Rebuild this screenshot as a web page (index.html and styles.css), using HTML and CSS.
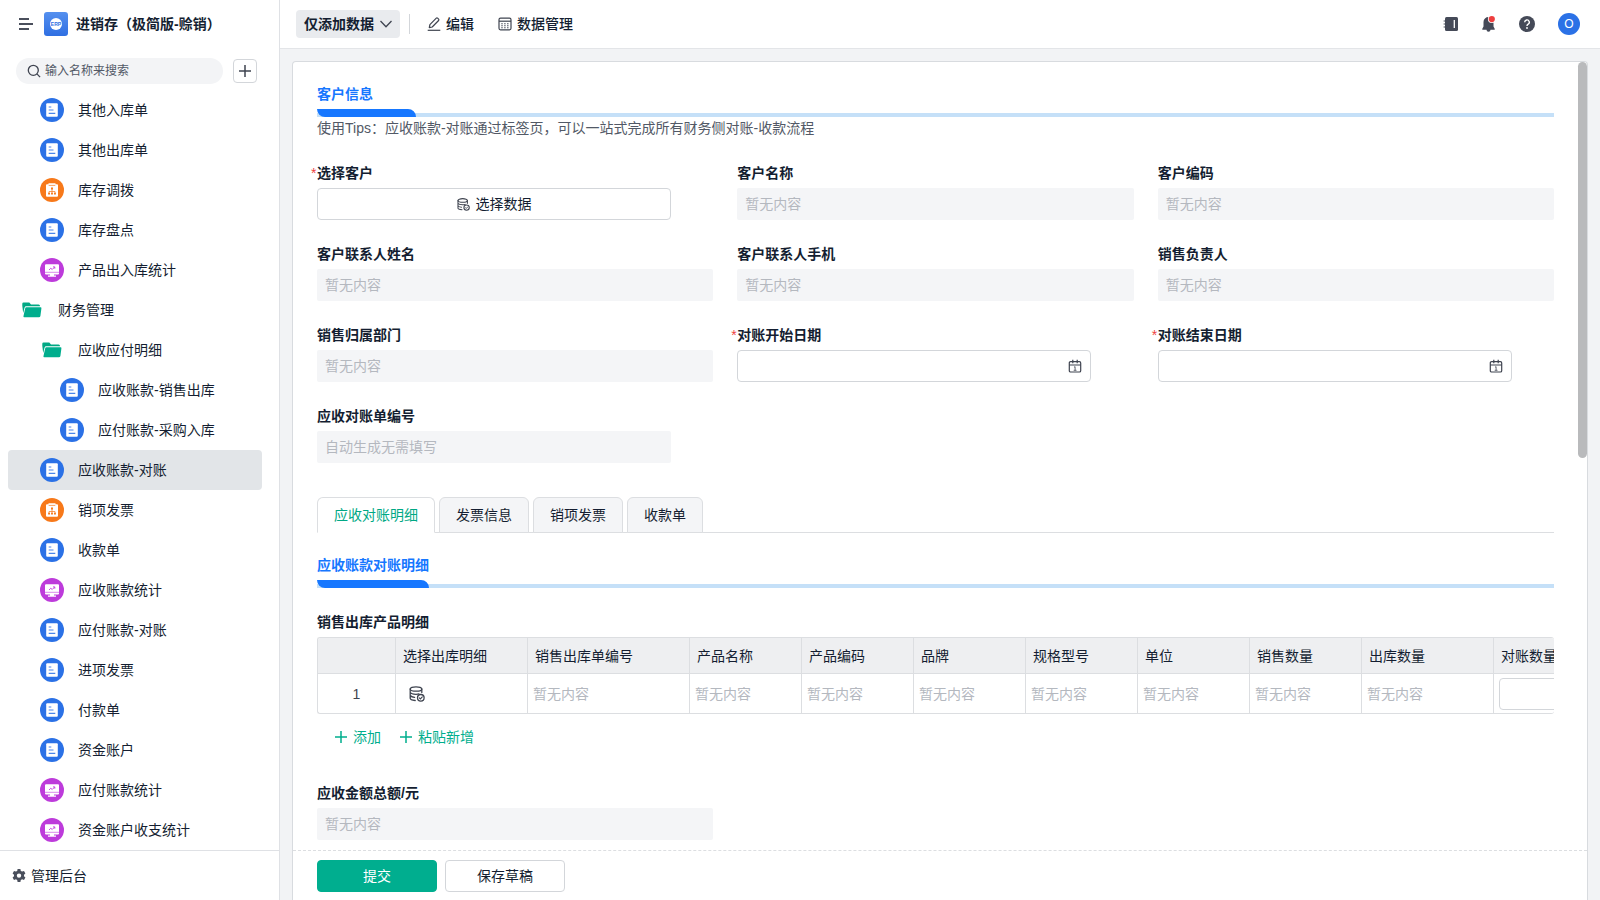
FILE: index.html
```html
<!DOCTYPE html>
<html lang="zh-CN">
<head>
<meta charset="utf-8">
<title>进销存（极简版-赊销）</title>
<link rel="stylesheet" href="styles.css">
</head>
<body>
<svg class="sprite" aria-hidden="true">
  <symbol id="i-doc" viewBox="0 0 24 24">
    <circle cx="12" cy="12" r="12" fill="#2b71e6"/>
    <rect x="6.200" y="5.300" width="11.600" height="13.400" rx="1" fill="#fff"/>
    <path d="M8.700 9h2.600M8.700 12h4.800M8.700 15.300h6.600" stroke="#4a86ea" stroke-width="1.200"/>
  </symbol>
  <symbol id="i-flow" viewBox="0 0 24 24">
    <circle cx="12" cy="12" r="12" fill="#f7791a"/>
    <path d="M7 6.200h1.500V5.200h7v1H17a1 1 0 0 1 1 1v10.600a1 1 0 0 1-1 1H7a1 1 0 0 1-1-1V7.200a1 1 0 0 1 1-1z" fill="#fff"/>
    <path d="M8.700 7.400h6.600" stroke="#f7791a" stroke-width=".7"/>
    <path d="M12 11v4M9 15v-1.500h6V15" fill="none" stroke="#f7791a" stroke-width=".7"/>
    <path d="M11 9.600h2v2h-2zM8.100 14.700h1.900v1.700H8.100zM11.050 14.700h1.900v1.700h-1.900zM14 14.700h1.900v1.700H14z" fill="#f7791a"/>
  </symbol>
  <symbol id="i-chart" viewBox="0 0 24 24">
    <circle cx="12" cy="12" r="12" fill="#bd3bdb"/>
    <path d="M6 6.200h12a1 1 0 0 1 1 1v8.300a1 1 0 0 1-1 1h-4v1h2v1.200H8v-1.200h2v-1H6a1 1 0 0 1-1-1V7.200a1 1 0 0 1 1-1z" fill="#fff"/>
    <path d="M9 12l1.800-1.800 1.400 1.300L14.500 9.200M13 8.900h1.800v1.800" fill="none" stroke="#bd3bdb" stroke-width=".9"/>
    <path d="M5 14.300h14" stroke="#bd3bdb" stroke-width=".6"/>
  </symbol>
  <symbol id="i-folder" viewBox="0 0 20 16">
    <path d="M1.500 .6h5.800l1.700 2H16.500A1.500 1.500 0 0 1 18 4.300H4.200A1.600 1.600 0 0 0 2.600 5.500L1.200 11 0.300 4V1.800A1.200 1.200 0 0 1 1.500.6z" fill="#00a884"/>
    <path d="M4.300 5.300h14.200a.9.9 0 0 1 .9 1.100l-1 7.600a1.500 1.500 0 0 1-1.500 1.300H2.500a1 1 0 0 1-1-1.300L3.200 6.200a1.200 1.200 0 0 1 1.100-.9z" fill="#00ae8d"/>
  </symbol>
  <symbol id="i-plus" viewBox="0 0 14 14">
    <path d="M7 1v12M1 7h12" stroke="currentColor" stroke-width="1.500"/>
  </symbol>
  <symbol id="i-data" viewBox="0 0 16 16">
    <g fill="none" stroke="currentColor" stroke-width="1.300" stroke-linecap="round">
      <ellipse cx="7" cy="3" rx="5.800" ry="2.200"/>
      <path d="M1.200 3v9.300c0 1.100 2.100 2 5 2.200M12.800 3v3.600M1.200 6.300c.6 1.200 3 2 5.800 2 1.200 0 2.200-.1 3-.4M1.200 9.400c.5 1 2.100 1.800 4.400 2"/>
      <circle cx="11.800" cy="11.800" r="3.300"/>
      <path d="M10.300 11.800l1.100 1.100 1.900-2" stroke-width="1.100"/>
    </g>
  </symbol>
  <symbol id="i-cal" viewBox="0 0 14 14">
    <g fill="none" stroke="currentColor" stroke-width="1.200">
      <rect x="1.300" y="2.600" width="11.400" height="10.400" rx="1.300"/>
      <path d="M1.300 6h11.400M4.800 .8v3.400M9.200 .8v3.400"/>
      <path d="M6 8.200l1.100-.5v3.600M5.700 11.300h2.800" stroke-width=".8"/>
    </g>
  </symbol>
</svg>

<div class="app">
  <aside class="sidebar">
    <header class="brand">
      <button class="icon-btn" type="button" aria-label="收起菜单">
        <svg width="14" height="14" viewBox="0 0 14 14"><path d="M0 2h10M0 7h14M0 12h10" stroke="#4a4f5c" stroke-width="1.800"/></svg>
      </button>
      <svg width="24" height="24" viewBox="0 0 24 24">
        <defs><linearGradient id="logo" x1="0" y1="0" x2="0" y2="1"><stop offset="0" stop-color="#5590ef"/><stop offset="1" stop-color="#2f6fe2"/></linearGradient></defs>
        <rect width="24" height="24" rx="3" fill="url(#logo)"/>
        <circle cx="12" cy="12" r="6" fill="#fff"/>
        <text class="logo-text" x="12" y="14" text-anchor="middle">ERP</text>
      </svg>
      <h1 class="brand-name">进销存（极简版-赊销）</h1>
    </header>
    <div class="search-row">
      <label class="search">
        <svg width="14" height="14" viewBox="0 0 14 14"><g fill="none" stroke="#3f4450" stroke-width="1.300"><circle cx="6.300" cy="6.300" r="5"/><path d="M9.900 9.900l3.200 3.200"/></g></svg>
        <input type="text" placeholder="输入名称来搜索" aria-label="输入名称来搜索">
      </label>
      <button class="add-btn" type="button" aria-label="新建"><svg width="14" height="14"><use href="#i-plus"/></svg></button>
    </div>
    <nav class="menu">
      <a class="item" href="#"><svg class="dot"><use href="#i-doc"/></svg>其他入库单</a>
      <a class="item" href="#"><svg class="dot"><use href="#i-doc"/></svg>其他出库单</a>
      <a class="item" href="#"><svg class="dot"><use href="#i-flow"/></svg>库存调拨</a>
      <a class="item" href="#"><svg class="dot"><use href="#i-doc"/></svg>库存盘点</a>
      <a class="item" href="#"><svg class="dot"><use href="#i-chart"/></svg>产品出入库统计</a>
      <a class="item level-0" href="#"><span class="dot"><svg width="20" height="16"><use href="#i-folder"/></svg></span>财务管理</a>
      <a class="item" href="#"><span class="dot"><svg width="20" height="16"><use href="#i-folder"/></svg></span>应收应付明细</a>
      <a class="item level-2" href="#"><svg class="dot"><use href="#i-doc"/></svg>应收账款-销售出库</a>
      <a class="item level-2" href="#"><svg class="dot"><use href="#i-doc"/></svg>应付账款-采购入库</a>
      <a class="item active" href="#" aria-current="page"><svg class="dot"><use href="#i-doc"/></svg>应收账款-对账</a>
      <a class="item" href="#"><svg class="dot"><use href="#i-flow"/></svg>销项发票</a>
      <a class="item" href="#"><svg class="dot"><use href="#i-doc"/></svg>收款单</a>
      <a class="item" href="#"><svg class="dot"><use href="#i-chart"/></svg>应收账款统计</a>
      <a class="item" href="#"><svg class="dot"><use href="#i-doc"/></svg>应付账款-对账</a>
      <a class="item" href="#"><svg class="dot"><use href="#i-doc"/></svg>进项发票</a>
      <a class="item" href="#"><svg class="dot"><use href="#i-doc"/></svg>付款单</a>
      <a class="item" href="#"><svg class="dot"><use href="#i-doc"/></svg>资金账户</a>
      <a class="item" href="#"><svg class="dot"><use href="#i-chart"/></svg>应付账款统计</a>
      <a class="item" href="#"><svg class="dot"><use href="#i-chart"/></svg>资金账户收支统计</a>
    </nav>
    <a class="admin" href="#">
      <svg width="14" height="14" viewBox="0 0 14 14"><path fill="#4a4f5c" fill-rule="evenodd" d="M5.600 0h2.800l.4 1.900 1.300.7 1.900-.6 1.400 2.400-1.400 1.300v1.500l1.400 1.300-1.400 2.400-1.900-.6-1.300.8-.4 1.900H5.600l-.4-1.900-1.300-.8-1.900.6L.6 8.500 2 7.200V5.700L.6 4.400 2 2l1.900.6 1.300-.7zM7 4.400a2.200 2.200 0 1 0 0 4.400 2.200 2.200 0 0 0 0-4.400z"/></svg>
      管理后台
    </a>
  </aside>

  <main class="main">
    <header class="topbar">
      <button class="mode" type="button">仅添加数据
        <svg width="14" height="8" viewBox="0 0 14 8"><path d="M1.500 1L7 6.700 12.500 1" fill="none" stroke="#3f4450" stroke-width="1.300"/></svg>
      </button>
      <span class="divider"></span>
      <button class="tool" type="button">
        <svg width="14" height="14" viewBox="0 0 14 14"><g fill="none" stroke="#3f4450" stroke-width="1.200" stroke-linejoin="round"><path d="M2.300 10.700l.6-3L9.300 1.200a.9.9 0 0 1 1.300 0l1 1a.9.9 0 0 1 0 1.300L5.200 10z"/><path d="M.7 13.300h12.600"/></g></svg>
        编辑
      </button>
      <button class="tool" type="button">
        <svg width="14" height="14" viewBox="0 0 14 14"><g fill="none" stroke="#3f4450" stroke-width="1.200"><rect x="1" y="1.200" width="12" height="11.600" rx="1.500"/><path d="M1 4.200h12"/><path d="M3.300 6.800h8M3.300 8.800h8M3.300 10.800h8" stroke-width="1.100" stroke-dasharray="1.400 1.500"/></g></svg>
        数据管理
      </button>
      <div class="top-actions">
        <button class="icon-btn" type="button" aria-label="通讯录">
          <svg width="16" height="16" viewBox="0 0 16 16"><path fill="#454a58" d="M3.500 1h10A1.500 1.500 0 0 1 15 2.500v11a1.500 1.500 0 0 1-1.500 1.500h-10A1.500 1.500 0 0 1 2 13.500v-11A1.500 1.500 0 0 1 3.500 1z"/><path d="M.6 5h2M.6 8h2M.6 11h2" stroke="#454a58" stroke-width="1.200"/><path d="M11.300 4v8" stroke="#fff" stroke-width="1.300"/></svg>
        </button>
        <button class="icon-btn" type="button" aria-label="消息">
          <svg width="16" height="16" viewBox="0 0 16 16"><path fill="#454a58" d="M7.500 1a5 5 0 0 1 5 5v4.500l1.200 2.300v.9H1.300v-.9l1.200-2.300V6a5 5 0 0 1 5-5zM5.500 13.700h4a2 2 0 0 1-4 0z"/><circle cx="10.800" cy="3.100" r="3.900" fill="#fff"/><circle cx="10.800" cy="3.100" r="3.100" fill="#ee3f3f"/></svg>
        </button>
        <button class="icon-btn" type="button" aria-label="帮助">
          <svg width="16" height="16" viewBox="0 0 16 16"><circle cx="8" cy="8" r="8" fill="#454a58"/><path d="M5.700 6.300a2.300 2.300 0 1 1 3.500 1.900c-.8.500-1.200.8-1.200 1.700" fill="none" stroke="#fff" stroke-width="1.400"/><circle cx="8" cy="12" r=".9" fill="#fff"/></svg>
        </button>
        <button class="avatar" type="button">O</button>
      </div>
    </header>

    <form class="card">
      <div class="scroll">
        <h2 class="section-title"><span class="section-text">客户信息</span></h2>
        <p class="tips">使用Tips：应收账款-对账通过标签页，可以一站式完成所有财务侧对账-收款流程</p>
        <div class="grid">
          <div class="field"><span class="label required" id="l-cust">选择客户</span><button class="box narrow pick" type="button" aria-describedby="l-cust"><svg width="13" height="13"><use href="#i-data"/></svg>选择数据</button></div>
          <div class="field"><label class="label" for="f2">客户名称</label><input class="box readonly" id="f2" placeholder="暂无内容" readonly></div>
          <div class="field"><label class="label" for="f3">客户编码</label><input class="box readonly" id="f3" placeholder="暂无内容" readonly></div>
          <div class="field"><label class="label" for="f4">客户联系人姓名</label><input class="box readonly" id="f4" placeholder="暂无内容" readonly></div>
          <div class="field"><label class="label" for="f5">客户联系人手机</label><input class="box readonly" id="f5" placeholder="暂无内容" readonly></div>
          <div class="field"><label class="label" for="f6">销售负责人</label><input class="box readonly" id="f6" placeholder="暂无内容" readonly></div>
          <div class="field"><label class="label" for="f7">销售归属部门</label><input class="box readonly" id="f7" placeholder="暂无内容" readonly></div>
          <div class="field"><label class="label required" for="f8">对账开始日期</label><div class="box narrow date"><input id="f8" type="text"><svg width="14" height="14"><use href="#i-cal"/></svg></div></div>
          <div class="field"><label class="label required" for="f9">对账结束日期</label><div class="box narrow date"><input id="f9" type="text"><svg width="14" height="14"><use href="#i-cal"/></svg></div></div>
          <div class="field"><label class="label" for="f10">应收对账单编号</label><input class="box narrow readonly" id="f10" placeholder="自动生成无需填写" readonly></div>
        </div>

        <div class="tabs" role="tablist">
          <button class="tab on" type="button" role="tab" aria-selected="true">应收对账明细</button>
          <button class="tab" type="button" role="tab">发票信息</button>
          <button class="tab" type="button" role="tab">销项发票</button>
          <button class="tab" type="button" role="tab">收款单</button>
        </div>

        <h2 class="section-title"><span class="section-text">应收账款对账明细</span></h2>
        <div class="field subform">
          <span class="label" id="l-sub">销售出库产品明细</span>
          <div class="table-wrap">
            <table class="table" aria-labelledby="l-sub">
              <colgroup><col class="c-index"><col class="c-mid"><col class="c-wide"><col span="6" class="c-std"><col span="2" class="c-mid"></colgroup>
              <thead>
                <tr><th></th><th>选择出库明细</th><th>销售出库单编号</th><th>产品名称</th><th>产品编码</th><th>品牌</th><th>规格型号</th><th>单位</th><th>销售数量</th><th>出库数量</th><th>对账数量</th></tr>
              </thead>
              <tbody>
                <tr><td class="index">1</td><td><button class="icon-btn cell-pick" type="button" aria-label="选择出库明细"><svg width="16" height="16"><use href="#i-data"/></svg></button></td><td>暂无内容</td><td>暂无内容</td><td>暂无内容</td><td>暂无内容</td><td>暂无内容</td><td>暂无内容</td><td>暂无内容</td><td>暂无内容</td><td><input class="box" type="text" aria-label="对账数量"></td></tr>
              </tbody>
            </table>
          </div>
          <div class="row-actions">
            <button class="link" type="button"><svg width="14" height="14"><use href="#i-plus"/></svg>添加</button>
            <button class="link" type="button"><svg width="14" height="14"><use href="#i-plus"/></svg>粘贴新增</button>
          </div>
        </div>
        <div class="grid">
          <div class="field"><label class="label" for="f11">应收金额总额/元</label><input class="box readonly" id="f11" placeholder="暂无内容" readonly></div>
        </div>
      </div>
      <span class="thumb"></span>
      <footer class="actions">
        <button class="btn primary" type="submit">提交</button>
        <button class="btn" type="button">保存草稿</button>
      </footer>
    </form>
  </main>
</div>
</body>
</html>
```
FILE: styles.css
```css
* { box-sizing: border-box; }
body {
  margin: 0;
  color: #141e31;
  font: 14px/22px "Liberation Sans", "Noto Sans CJK SC", sans-serif;
}
button, input { font: inherit; color: inherit; }
button { cursor: pointer; padding: 0; border: 0; background: none; }
input { min-width: 0; outline: 0; }
a { color: inherit; text-decoration: none; }
svg { flex: none; display: block; }
h1, h2, p { margin: 0; }
.sprite { position: absolute; width: 0; height: 0; }

.app { display: flex; height: 100vh; overflow: hidden; }

/* Sidebar */
.sidebar {
  flex: none;
  width: 280px;
  display: flex;
  flex-direction: column;
  border-right: 1px solid #dfe1e5;
  background: #fff;
}
.brand { display: flex; align-items: center; height: 48px; padding-left: 19px; }
.brand svg { margin-right: 8px; }
.brand .icon-btn svg { margin: 0; }
.brand .icon-btn { margin-right: 11px; }
.brand-name { font-size: 14px; font-weight: 600; }
.logo-text { font: bold 5px "Liberation Sans", sans-serif; fill: #2f6fe2; }
.search-row { display: flex; align-items: center; gap: 10px; padding: 10px 22px 6px 16px; }
.search {
  flex: 1;
  min-width: 0;
  display: flex;
  align-items: center;
  gap: 4px;
  height: 26px;
  padding: 0 11px;
  border-radius: 13px;
  background: #f3f4f6;
}
.search input { flex: 1; height: 24px; padding: 0; border: 0; background: none; font-size: 12px; }
.search input::placeholder { color: #525966; }
.add-btn {
  display: grid;
  place-items: center;
  width: 24px;
  height: 24px;
  border: 1px solid #d3d6da;
  border-radius: 4px;
  color: #3f4450;
}
.menu { flex: 1; min-height: 0; overflow: hidden; padding: 0 17px 0 8px; }
.item { display: flex; align-items: center; gap: 14px; height: 40px; padding-left: 32px; border-radius: 4px; }
.level-0 { padding-left: 12px; }
.level-2 { padding-left: 52px; }
.item.active { background: #e2e5e8; }
.dot { flex: none; display: grid; place-items: center; width: 24px; height: 24px; }
.admin { display: flex; align-items: center; gap: 5px; height: 50px; padding-left: 12px; border-top: 1px solid #dfe1e5; }

/* Top bar */
.main { flex: 1; min-width: 0; display: flex; flex-direction: column; background: #f2f3f5; }
.topbar {
  flex: none;
  display: flex;
  align-items: center;
  height: 49px;
  padding: 0 20px 1px 16px;
  border-bottom: 1px solid #e3e5e8;
  background: #fff;
}
.mode {
  display: flex;
  align-items: center;
  gap: 5px;
  height: 28px;
  padding: 0 7px 0 8px;
  border-radius: 4px;
  background: #e9ebee;
  font-weight: 600;
}
.divider { width: 1px; height: 20px; margin: 0 17px 0 9px; background: #d3d6da; }
.tool { display: flex; align-items: center; gap: 5px; margin-right: 24px; font-weight: 500; }
.top-actions { display: flex; align-items: center; gap: 22px; margin-left: auto; }
.icon-btn { display: grid; place-items: center; }
.avatar { width: 22px; height: 22px; margin-left: 1px; border-radius: 50%; background: #2b71e6; color: #fff; font-size: 12px; }

/* Form card */
.card {
  position: relative;
  flex: 1;
  min-height: 0;
  display: flex;
  flex-direction: column;
  margin: 12px 12px 0;
  border: 1px solid #d8dbdf;
  border-bottom: 0;
  border-radius: 4px 4px 0 0;
  background: #fff;
}
.scroll { flex: 1; min-height: 0; overflow: auto; scrollbar-width: none; padding: 0 33px 24px 24px; }
.thumb { position: absolute; top: 0; right: 0; width: 9px; height: 396px; border-radius: 5px; background: #b9babc; }

.section-title {
  display: flex;
  padding-top: 22px;
  background: linear-gradient(#c5e0f8, #c5e0f8) bottom / 100% 4px no-repeat;
  color: #1677ff;
  font-size: 14px;
  line-height: 21px;
  font-weight: 600;
}
.section-text { min-width: 99px; }
.section-text::after {
  content: "";
  display: block;
  height: 8px;
  margin-top: 4px;
  border-radius: 0 8px 0 8px;
  background: #1677ff;
}
.tips { margin-bottom: 24px; color: #525966; }
.grid { display: grid; grid-template-columns: repeat(3, minmax(0, 1fr)); gap: 24px; }
.field { display: flex; flex-direction: column; gap: 4px; min-width: 0; }
.label { position: relative; align-self: flex-start; line-height: 21px; font-weight: 600; }
.required::before { content: "*"; position: absolute; left: -6px; top: 0; color: #ee3f3f; font-weight: 400; }
.box { width: 100%; height: 32px; padding: 0 8px; border: 1px solid #d3d6da; border-radius: 4px; background: #fff; }
.narrow { max-width: 354px; }
.readonly { border: 0; border-radius: 2px; background: #f4f5f7; }
.readonly::placeholder { color: #b4b8bf; }
.pick { display: flex; align-items: center; justify-content: center; gap: 6px; }
.pick svg { color: #3f4450; }
.date { display: flex; align-items: center; color: #3f4450; }
.date input { flex: 1; border: 0; padding: 0; background: none; }

.tabs { display: flex; gap: 4px; margin-top: 34px; box-shadow: inset 0 -1px #dcdee1; }
.tab {
  height: 36px;
  padding: 0 16px;
  border: 1px solid #dcdee1;
  border-radius: 6px 6px 0 0;
  background: #f4f5f7;
}
.tab.on { border-bottom-color: #fff; background: #fff; color: #00a884; }

.subform { margin: 24px 0 35px; }
.table-wrap { overflow: hidden; border: 1px solid #dcdee1; border-right: 0; border-radius: 3px; }
.table { table-layout: fixed; width: 1308px; border-spacing: 0; }
.c-index { width: 78px; }
.c-mid { width: 132px; }
.c-wide { width: 162px; }
.c-std { width: 112px; }
.table th { height: 36px; padding: 0 7px; border: solid #dcdee1; border-width: 0 1px 1px 0; background: #eeeff1; font-weight: 400; text-align: left; }
.table td { height: 39px; padding: 0 5px; border-right: 1px solid #dcdee1; color: #b4b8bf; }
.table .index { color: #3f4450; text-align: center; }
.cell-pick { margin-left: 8px; color: #3f4450; }
.row-actions { display: flex; gap: 18px; padding: 8px 17px 0; color: #00ae8d; }
.link { display: flex; align-items: center; gap: 5px; }

.actions { flex: none; display: flex; gap: 8px; padding: 9px 24px 8px; border-top: 1px dashed #dcdee1; }
.btn { width: 120px; height: 32px; border: 1px solid #d3d6da; border-radius: 4px; background: #fff; }
.btn.primary { border-color: #00ae8f; background: #00ae8f; color: #fff; }
```
